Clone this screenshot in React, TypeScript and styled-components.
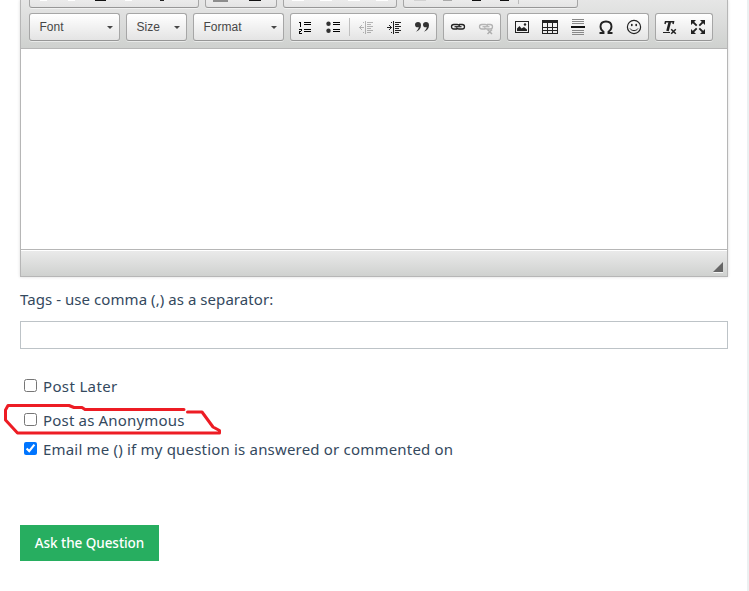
import React from "react";
import styled, { createGlobalStyle } from "styled-components";

const GlobalStyle = createGlobalStyle`
  * { box-sizing: border-box; }
  body { margin: 0; background: #fff; }
`;

const Page = styled.main`
  position: relative;
  width: 749px;
  height: 591px;
  overflow: hidden;
  padding: 0 19px 0 20px;
  border-right: 2px solid #ecf0f1;
  color: #34495e;
  font-family: "Noto Sans", sans-serif;
`;

const Editor = styled.section`
  width: 708px;
  height: 277px;
  border: 1px solid #b6b6b6;
  border-top: 0;
  box-shadow: 0 0 3px rgba(0, 0, 0, 0.15);
  display: flex;
  flex-direction: column;
`;

const Toolbar = styled.div`
  height: 49px;
  padding: 0 8px 7px;
  border-bottom: 1px solid #b6b6b6;
  background: linear-gradient(#e6e6e6, #cfd1cf);
  display: flex;
  flex-direction: column;
  justify-content: flex-end;
  gap: 5px;
  overflow: hidden;
`;

const ToolRow = styled.div`
  display: flex;
  flex: none;
  gap: 6px;
`;

const Group = styled.div<{ $width: number }>`
  width: ${(p) => p.$width}px;
  height: 28px;
  flex: none;
  display: flex;
  align-items: center;
  border: 1px solid #a6a6a6;
  border-bottom-color: #979797;
  border-radius: 3px;
  background: linear-gradient(#fff, #e4e4e4);
  box-shadow: 0 1px 0 rgba(255, 255, 255, 0.5);
`;

const ClippedGroup = styled(Group)`
  align-items: flex-end;
  svg { display: block; }
`;

const Combo = styled(Group)`
  justify-content: space-between;
  padding: 0 6px 0 9.5px;
  font: 12px "Liberation Sans", Arial, sans-serif;
  color: #474747;
`;

const Arrow = styled.span`
  border: 3px solid transparent;
  border-top-color: #474747;
  border-bottom: 0;
  margin-top: 1px;
`;

const ToolButton = styled.span<{ $disabled?: boolean }>`
  width: 28px;
  height: 26px;
  padding: 5px 6px;
  opacity: ${(p) => (p.$disabled ? 0.3 : 1)};
  svg { display: block; }
`;

const Separator = styled.span`
  width: 1px;
  height: 18px;
  margin: 0 2px;
  background: #c0c0c0;
`;

const Content = styled.div`
  flex: 1;
  background: #fff;
`;

const StatusBar = styled.div`
  height: 27px;
  flex: none;
  border-top: 1px solid #b6b6b6;
  box-shadow: inset 0 1px 0 #fff;
  background: linear-gradient(#ebebeb, #cfd1cf);
  display: flex;
  justify-content: flex-end;
  align-items: flex-end;
  padding: 0 4px 4px;
`;

const Resizer = styled.span`
  border: 5px solid transparent;
  border-right-color: #666;
  border-bottom-color: #666;
  filter: drop-shadow(0 1px 0 #f4f4f4);
`;

const TagsLabel = styled.label`
  display: block;
  height: 44px;
  padding-top: 10px;
  font-size: 15px;
  line-height: 24px;
  letter-spacing: 0.06px;
  white-space: nowrap;
`;

const TagsInput = styled.input`
  display: block;
  width: 708px;
  height: 28px;
  margin: 0;
  border: 1px solid #bdc3c7;
  border-radius: 0;
`;

const Options = styled.div`
  margin-top: 25px;
  display: grid;
  grid-template-rows: 34px 29px 29px;
`;

const Option = styled.label<{ $spacing: number }>`
  height: 24px;
  display: flex;
  align-items: center;
  font-size: 15px;
  line-height: 24px;
  letter-spacing: ${(p) => p.$spacing}px;
  white-space: nowrap;
  input { width: 13px; height: 13px; margin: 0 6px 2px 4px; }
`;

const Submit = styled.button`
  display: block;
  width: 139px;
  height: 36px;
  margin-top: 59px;
  padding: 0;
  border: 0;
  background: #27ae60;
  color: #fff;
  font: 500 13.5px "Noto Sans", sans-serif;
  letter-spacing: -0.05px;
  white-space: nowrap;
`;

const Markup = styled.svg`
  position: absolute;
  left: 0;
  top: 398px;
  pointer-events: none;
`;

type IconProps = { children: React.ReactNode; smooth?: boolean };
const Icon = ({ children, smooth }: IconProps) => (
  <svg width="16" height="16" viewBox="0 0 16 16" fill="none" stroke="#222" shapeRendering={smooth ? "auto" : "crispEdges"}>
    {children}
  </svg>
);

const NumberedList = () => (
  <Icon>
    <path stroke="#000" d="M7 3.5h7M7 5.5h7M7 10.5h7M7 12.5h7M2 3.5h2M3.500 3v5M2 10.500h3M4.500 10v2M2 12.500h2M2.500 12v2M2 14.500h3" />
  </Icon>
);
const BulletedList = () => (
  <Icon>
    <path stroke="#000" d="M8 3.500h7M8 5.500h7M8 10.500h7M8 12.500h7" />
    <g shapeRendering="auto" fill="#333" stroke="none"><circle cx="3.500" cy="4.800" r="2.200" /><circle cx="3.500" cy="11.800" r="2.200" /></g>
  </Icon>
);
const Indent = ({ back }: { back?: boolean }) => (
  <Icon>
    <path d="M7.500 2v13M9 3.500h6M9 5.500h4M9 7.500h6M9 9.500h4M9 11.500h6M9 13.500h4M5 3.500h1M5 13.500h1" />
    <path d={back ? "M1 8.500h5M2.500 7v3M3.500 6v1M3.500 10v1" : "M1 8.500h5M4.500 7v3M3.500 6v1M3.500 10v1"} />
  </Icon>
);
const Quote = () => (
  <Icon smooth>
    <g fill="#333" stroke="none">
      <path d="M4 3C2.200 3 1 4.100 1 5.700s1.100 2.600 2.600 2.600c.5 0 .9-.1 1.200-.3-.2 1.900-1.300 3.400-3 4.800C5.200 11.900 7 9.200 7 6.200 7 4.200 5.800 3 4 3z" />
      <path d="M12 3c-1.800 0-3 1.100-3 2.700s1.100 2.600 2.600 2.600c.5 0 .9-.1 1.200-.3-.2 1.900-1.300 3.400-3 4.800 3.400-.9 5.200-3.600 5.200-6.600C15 4.200 13.800 3 12 3z" />
    </g>
  </Icon>
);
const Link = ({ broken }: { broken?: boolean }) => (
  <Icon smooth>
    <path d="M7 10H3.800C2.300 10 1.500 9 1.500 7.700S2.300 5.500 3.800 5.500h3.400c1.300 0 2.100.7 2.300 1.600M9 5.500h3.200c1.500 0 2.300 1 2.300 2.200S13.700 10 12.200 10H8.800c-1.300 0-2.100-.7-2.300-1.600" strokeWidth="1.300" />
    <path d="M4.500 7.700h7" strokeWidth="1.200" />
    {broken && <path d="M9.500 10.500l4.500 4.500M14 10.500L9.500 15" strokeWidth="1.500" />}
  </Icon>
);
const Picture = () => (
  <Icon smooth>
    <rect x="1.500" y="2.500" width="13" height="11" />
    <path d="M3 12V9.500L5.500 7l2 2.500L10 8l3 2.500V12z" fill="#222" stroke="none" />
    <circle cx="11" cy="5.500" r="1.200" fill="#222" stroke="none" />
  </Icon>
);
const Table = () => (
  <Icon>
    <rect x="0.500" y="1.500" width="15" height="13" />
    <path d="M0 2.500h16" strokeWidth="3" />
    <path d="M1 8.500h14M1 11.500h14M5.500 4v11M10.500 4v11" />
  </Icon>
);
const Rule = () => (
  <Icon>
    <path d="M2 .5h12M2 2.500h12M2 4.500h12M2 11.500h12M2 13.500h12M2 15.500h12" stroke="#888" />
    <path d="M1 8h14" strokeWidth="2" stroke="#111" />
  </Icon>
);
const Omega = () => (
  <Icon smooth>
    <path d="M1.500 14h4v-1.200C3.400 11.500 2.500 9.700 2.500 7.600 2.500 4.500 4.700 2.500 8 2.500s5.500 2 5.500 5.100c0 2.100-.9 3.900-3 5.200V14h4" strokeWidth="1.900" />
  </Icon>
);
const Smile = () => (
  <Icon smooth>
    <circle cx="8" cy="8" r="6.600" strokeWidth="1.200" />
    <ellipse cx="5.800" cy="6" rx=".9" ry="1.300" fill="#222" stroke="none" />
    <ellipse cx="10.200" cy="6" rx=".9" ry="1.300" fill="#222" stroke="none" />
    <path d="M4 9.500c1.600 2.800 6.400 2.800 8 0" />
  </Icon>
);
const ClearFormat = () => (
  <Icon smooth>
    <path d="M3 5l.5-2.200h8L11 5" strokeWidth="1.500" />
    <path d="M7.800 3L5.500 12" strokeWidth="2.600" />
    <path d="M1 13.500h7" />
    <path d="M9.200 10.200l4.600 4.600M13.800 10.200l-4.600 4.600" strokeWidth="1.500" />
  </Icon>
);
const Expand = () => (
  <Icon smooth>
    <path d="M3 3l3.700 3.700M13 3L9.300 6.700M3 13l3.700-3.700M13 13L9.300 9.300" strokeWidth="1.800" />
    <path d="M1 1h5L1 6zM15 1v5l-5-5zM1 15v-5l5 5zM15 15h-5l5-5z" fill="#222" stroke="none" />
  </Icon>
);

type Stub = { x: number; w: number; color: string; h?: number };
const clipped: { width: number; stubs: Stub[] }[] = [
  { width: 170, stubs: [{ x: 10, w: 7, color: "#fff" }, { x: 38, w: 7, color: "#fff" }, { x: 65, w: 11, color: "#111" }, { x: 95, w: 7, color: "#fff" }, { x: 130, w: 4, color: "#222" }] },
  { width: 72, stubs: [{ x: 7, w: 15, color: "#8d8d8d", h: 2 }, { x: 43, w: 12, color: "#111" }] },
  { width: 114, stubs: [{ x: 8, w: 12, color: "#fff" }, { x: 36, w: 12, color: "#fff" }, { x: 64, w: 12, color: "#fff" }, { x: 92, w: 12, color: "#fff" }] },
  { width: 175, stubs: [{ x: 10, w: 12, color: "#d2d2d2" }, { x: 39, w: 9, color: "#aaa" }, { x: 68, w: 9, color: "#111" }, { x: 96, w: 9, color: "#111" }, { x: 114, w: 1, color: "#bbb", h: 4 }] },
];

const combos = [
  { label: "Font", width: 91 },
  { label: "Size", width: 61 },
  { label: "Format", width: 91 },
];

export default function App() {
  return (
    <>
      <GlobalStyle />
      <Page>
        <Editor>
          <Toolbar>
            <ToolRow>
              {clipped.map((g) => (
                <ClippedGroup key={g.width} $width={g.width}>
                  <svg width={g.width - 2} height="7" shapeRendering="crispEdges">
                    {g.stubs.map((s) => <rect key={s.x} x={s.x} y="0" width={s.w} height={s.h ?? 1} fill={s.color} />)}
                  </svg>
                </ClippedGroup>
              ))}
            </ToolRow>
            <ToolRow>
              {combos.map((c) => <Combo key={c.label} $width={c.width}>{c.label}<Arrow /></Combo>)}
              <Group $width={147}>
                <ToolButton><NumberedList /></ToolButton>
                <ToolButton><BulletedList /></ToolButton>
                <Separator />
                <ToolButton $disabled><Indent back /></ToolButton>
                <ToolButton><Indent /></ToolButton>
                <ToolButton><Quote /></ToolButton>
              </Group>
              <Group $width={58}>
                <ToolButton><Link /></ToolButton>
                <ToolButton $disabled><Link broken /></ToolButton>
              </Group>
              <Group $width={142}>
                <ToolButton><Picture /></ToolButton>
                <ToolButton><Table /></ToolButton>
                <ToolButton><Rule /></ToolButton>
                <ToolButton><Omega /></ToolButton>
                <ToolButton><Smile /></ToolButton>
              </Group>
              <Group $width={58}>
                <ToolButton><ClearFormat /></ToolButton>
                <ToolButton><Expand /></ToolButton>
              </Group>
            </ToolRow>
          </Toolbar>
          <Content />
          <StatusBar><Resizer /></StatusBar>
        </Editor>
        <TagsLabel htmlFor="tags">Tags - use comma (,) as a separator:</TagsLabel>
        <TagsInput id="tags" />
        <Options>
          <Option $spacing={0.35}><input type="checkbox" />Post Later</Option>
          <Option $spacing={0.18}><input type="checkbox" />Post as Anonymous</Option>
          <Option $spacing={0.19}><input type="checkbox" defaultChecked />Email me () if my question is answered or commented on</Option>
        </Options>
        <Submit>Ask the Question</Submit>
        <Markup width="230" height="42" viewBox="0 398 230 42" fill="none" stroke="#ed1c24" strokeWidth="3" strokeLinecap="round" strokeLinejoin="round">
          <path d="M184 409.500H85L82 407.500H74L69 405.500H8L5.500 410V420L17.500 433H219.500V430.500L213 427L202 412H187.500" />
        </Markup>
      </Page>
    </>
  );
}
